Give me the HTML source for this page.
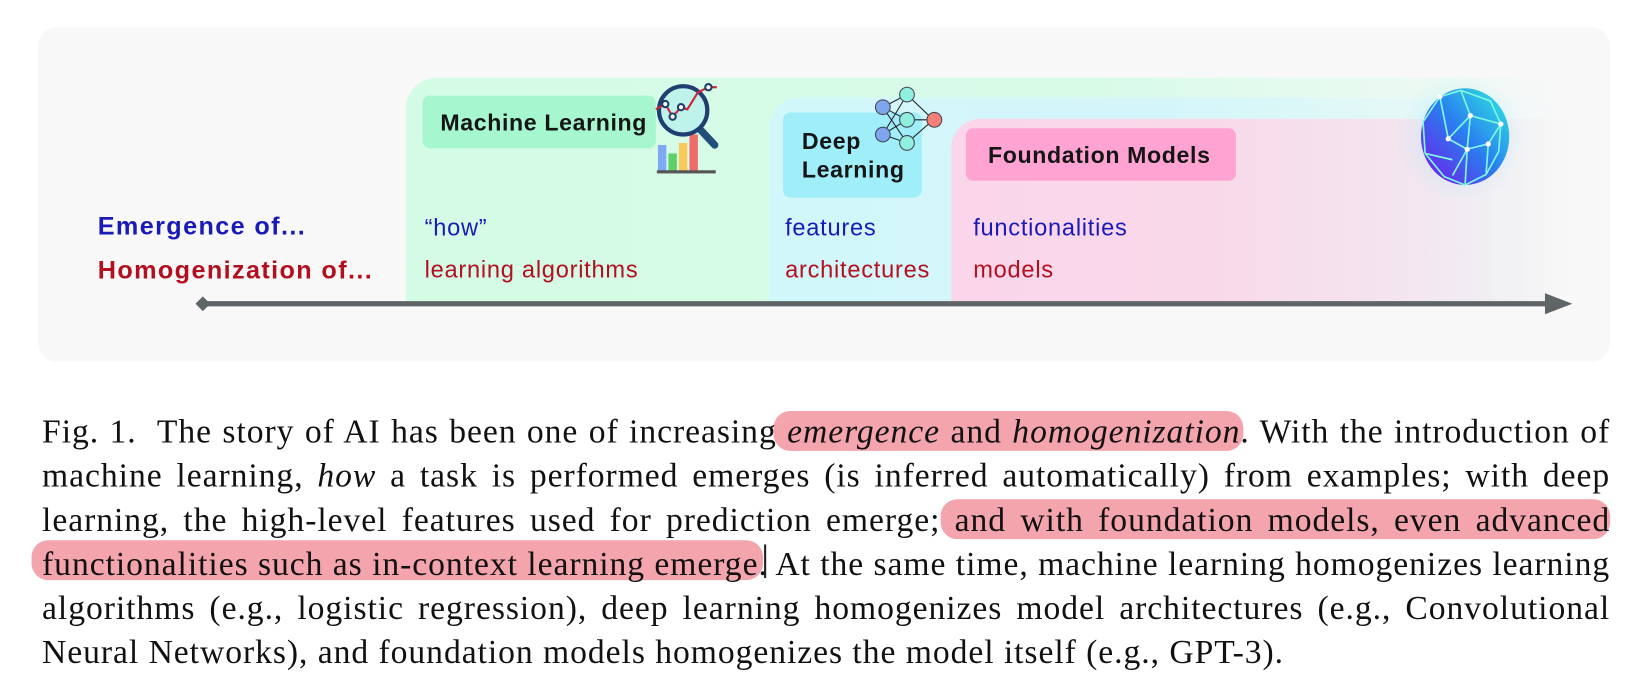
<!DOCTYPE html>
<html><head><meta charset="utf-8"><style>
*{margin:0;padding:0;box-sizing:border-box}
body{width:1648px;height:692px;background:#fff;position:relative;overflow:hidden;font-family:"Liberation Sans",sans-serif}
#w{position:absolute;left:0;top:0;width:1568px;height:659px;transform:scale(1.051);transform-origin:0 0}
.a{position:absolute}
.panel{left:36px;top:26px;width:1496px;height:318px;background:#f8f8f8;border-radius:18px}
.green{left:386px;top:74px;width:1100px;height:214px;border-radius:30px 30px 0 0;background:linear-gradient(90deg,#d4fbe6 0%,#d8fbe8 60%,rgba(230,250,240,0.6) 90%,rgba(248,248,248,0) 100%)}
.cyan{left:732px;top:93px;width:760px;height:195px;border-radius:28px 28px 0 0;background:linear-gradient(90deg,#d2f7fb 0%,#d4f6fa 50%,rgba(236,248,250,0.5) 90%,rgba(248,248,248,0) 100%)}
.pink{left:905px;top:113px;width:590px;height:175px;border-radius:28px 0 0 0;background:linear-gradient(90deg,#fbd6ea 0%,#f9d8ea 40%,#f3e6ef 75%,rgba(248,248,248,0) 100%)}
.box{font-weight:bold;color:#151515;font-size:22px;letter-spacing:0.6px;border-radius:7px;white-space:nowrap}
.t{font-size:22.5px;letter-spacing:0.7px;white-space:nowrap}
.b{color:#1a1ab8}.r{color:#b3101f}
.lab{font-size:24px;letter-spacing:1.3px;font-weight:bold}
.cap{font-family:"Liberation Serif",serif;font-size:32px;letter-spacing:0.9px;color:#111;left:40px;width:1492px;white-space:nowrap;text-align:justify;text-align-last:justify;line-height:42px;height:42px}
.hl{background:#f4a4ac;border-radius:16px}
</style></head><body><div id="w">
<div class="a panel"></div>
<div class="a green"></div>
<div class="a cyan"></div>
<div class="a pink"></div>
<div class="a box" style="left:402px;top:91px;width:222px;height:50px;background:#a6f6d0;padding:13px 0 0 17px">Machine Learning</div>
<div class="a box" style="left:745px;top:107px;width:132px;height:81px;background:#a0eefa;padding:14px 0 0 18px;line-height:27px">Deep<br>Learning</div>
<div class="a box" style="left:919px;top:122px;width:257px;height:50px;background:#ffa4d2;padding:13px 0 0 21px">Foundation Models</div>

<svg class="a" style="left:620px;top:78px" width="80" height="90" viewBox="0 0 80 90">
<rect x="6" y="60" width="8" height="26" fill="#7fa8f5"/><rect x="16" y="68" width="8" height="18" fill="#5fcf6a"/><rect x="26" y="58" width="8" height="28" fill="#f7c85a"/><rect x="36" y="50" width="8" height="36" fill="#ef6a6a"/>
<rect x="5" y="84" width="56" height="3" fill="#555"/>
<line x1="46" y1="45" x2="60" y2="60" stroke="#1f4f7a" stroke-width="7" stroke-linecap="round"/>
<circle cx="30" cy="27" r="23" fill="#bdf3ea" stroke="#1f3f70" stroke-width="4"/>
<polyline points="4,26 13,21 20,33 28,24 34,26 44,10 54,5 62,5" fill="none" stroke="#d0223a" stroke-width="2"/>
<circle cx="13" cy="21" r="3" fill="#fff" stroke="#1f3f70" stroke-width="2"/><circle cx="20" cy="33" r="3" fill="#fff" stroke="#1f3f70" stroke-width="2"/><circle cx="28" cy="24" r="3" fill="#fff" stroke="#1f3f70" stroke-width="2"/><circle cx="54" cy="5" r="3" fill="#fff" stroke="#1f3f70" stroke-width="2"/>
</svg>
<svg class="a" style="left:828px;top:80px" width="75" height="64" viewBox="0 0 75 64">
<g stroke="#222" stroke-width="1"><line x1="12" y1="22" x2="35" y2="10"/><line x1="12" y1="22" x2="35" y2="34"/><line x1="12" y1="22" x2="35" y2="56"/><line x1="12" y1="48" x2="35" y2="10"/><line x1="12" y1="48" x2="35" y2="34"/><line x1="12" y1="48" x2="35" y2="56"/><line x1="35" y1="10" x2="60" y2="34"/><line x1="35" y1="34" x2="60" y2="34"/><line x1="35" y1="56" x2="60" y2="34"/></g>
<circle cx="12" cy="22" r="7" fill="#7ea6ef" stroke="#445"/><circle cx="12" cy="48" r="7" fill="#7ea6ef" stroke="#445"/>
<circle cx="35" cy="10" r="7" fill="#8ff0e0" stroke="#445"/><circle cx="35" cy="34" r="7" fill="#8ff0e0" stroke="#445"/><circle cx="35" cy="56" r="7" fill="#8ff0e0" stroke="#445"/>
<circle cx="61" cy="34" r="7" fill="#f77f7a" stroke="#445"/>
</svg>
<div class="a" style="left:1325px;top:70px;width:130px;height:120px;border-radius:50%;background:radial-gradient(circle,rgba(120,220,255,0.35),rgba(248,248,248,0) 70%)"></div>
<svg class="a" style="left:1348px;top:82px" width="92" height="96" viewBox="0 0 92 96">
<defs><linearGradient id="g" x1="0" y1="1" x2="1" y2="0"><stop offset="0" stop-color="#7a10e8"/><stop offset="0.5" stop-color="#2a7cf0"/><stop offset="1" stop-color="#2ff0e0"/></linearGradient></defs>
<ellipse cx="46" cy="48" rx="42" ry="46" fill="url(#g)"/>
<g stroke="#7ff7e0" stroke-width="1.6" fill="none"><polyline points="22,10 42,4 70,14 80,36 78,62 66,84 46,94 26,86 8,64 6,34 22,10"/><line x1="22" y1="10" x2="30" y2="50"/><line x1="42" y1="4" x2="51" y2="28"/><line x1="51" y1="28" x2="30" y2="50"/><line x1="51" y1="28" x2="80" y2="36"/><line x1="51" y1="28" x2="48" y2="60"/><line x1="30" y1="50" x2="48" y2="60"/><line x1="48" y1="60" x2="68" y2="55"/><line x1="68" y1="55" x2="80" y2="36"/><line x1="48" y1="60" x2="34" y2="85"/><line x1="8" y1="64" x2="34" y2="70"/><line x1="48" y1="60" x2="46" y2="94"/><line x1="68" y1="55" x2="66" y2="84"/></g>
<g fill="#fff"><circle cx="30" cy="50" r="2.5"/><circle cx="51" cy="28" r="2.5"/><circle cx="48" cy="60" r="2.5"/><circle cx="68" cy="55" r="2.5"/><circle cx="22" cy="10" r="2.5"/><circle cx="80" cy="36" r="2.5"/></g>
</svg>

<div class="a t b lab" style="left:93px;top:202px">Emergence of...</div>
<div class="a t r lab" style="left:93px;top:244px">Homogenization of...</div>
<div class="a t b" style="left:404px;top:204px">“how”</div>
<div class="a t r" style="left:404px;top:244px">learning algorithms</div>
<div class="a t b" style="left:747px;top:204px">features</div>
<div class="a t r" style="left:747px;top:244px">architectures</div>
<div class="a t b" style="left:926px;top:204px">functionalities</div>
<div class="a t r" style="left:926px;top:244px">models</div>

<svg class="a" style="left:180px;top:276px" width="1320" height="26"><line x1="12" y1="13" x2="1300" y2="13" stroke="#5f6566" stroke-width="5"/><polygon points="6,13 13,6 20,13 13,20" fill="#5f6566"/><polygon points="1290,3 1316,13 1290,23" fill="#5f6566"/></svg>

<div class="a hl" style="left:736px;top:391px;width:447px;height:38px"></div>
<div class="a hl" style="left:895px;top:475px;width:637px;height:38px"></div>
<div class="a hl" style="left:30px;top:514px;width:696px;height:38px"></div>
<div class="a" style="left:727px;top:518px;width:2px;height:32px;background:#222"></div>

<div class="a cap" style="top:389px">Fig. 1.&nbsp; The story of AI has been one of increasing <i>emergence</i> and <i>homogenization</i>. With the introduction of</div>
<div class="a cap" style="top:431px">machine learning, <i>how</i> a task is performed emerges (is inferred automatically) from examples; with deep</div>
<div class="a cap" style="top:473px">learning, the high-level features used for prediction emerge; and with foundation models, even advanced</div>
<div class="a cap" style="top:515px">functionalities such as in-context learning emerge. At the same time, machine learning homogenizes learning</div>
<div class="a cap" style="top:557px">algorithms (e.g., logistic regression), deep learning homogenizes model architectures (e.g., Convolutional</div>
<div class="a cap" style="top:599px;text-align-last:left">Neural Networks), and foundation models homogenizes the model itself (e.g., GPT-3).</div>
</div></body></html>
